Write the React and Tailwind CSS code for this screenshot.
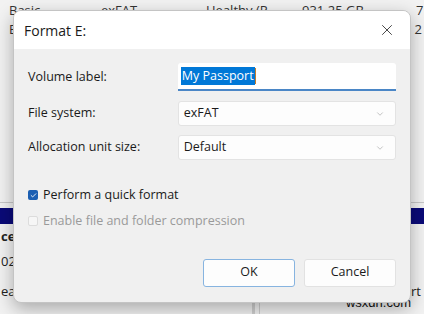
import { Check, ChevronDown, X } from "lucide-react";

const font = { fontFamily: '"Open Sans", "Noto Sans", sans-serif' };

const Select = ({ value }) => (
  <div className="flex h-[25px] w-[220px] items-center justify-between rounded-[3px] border border-[#e3e3e3] bg-[#fdfdfd] pl-[5px] pr-[10px] text-[12.5px] text-[#1a1a1a]">
    <span>{value}</span>
    <ChevronDown size={10} strokeWidth={1.2} className="text-[#888]" />
  </div>
);

const App = () => {
  return (
    <div className="relative h-[314px] w-[424px] overflow-hidden bg-[#f2f2f2] text-[#222]" style={font}>
      {/* backdrop: disk management list behind the dialog */}
      <div className="flex h-[20px] items-center pl-[9px] text-[13px] leading-none text-[#333]">
        <span className="w-[92px]">Basic</span>
        <span className="w-[105px]">exFAT</span>
        <span className="w-[96px]">Healthy (P</span>
        <span className="w-[114px]">931.25 GB</span>
        <span>7</span>
      </div>
      <div className="flex h-[20px] items-center justify-between pl-[9px] pr-[2px] text-[13px] text-[#333]">
        <span>E</span>
        <span>2</span>
      </div>
      <div className="mt-[162px] h-px bg-[#c8c8c8]" />
      <div className="mt-[5px] h-[16px] bg-[#0a0a78]" />
      <div className="flex">
        <div className="flex w-[255px] flex-col border-r-[3px] border-[#cfcfcf] pl-px text-[13px] leading-[25px] text-[#222]">
          <span className="font-bold">ce</span>
          <span>02.</span>
          <span className="mt-[5px]">ea</span>
          <span className="h-[20px]" />
        </div>
        <div className="ml-[4px] flex flex-1 flex-col items-end border-l border-[#cfcfcf] pr-[3px] pt-[58px] text-[13px] text-[#222]">
          <span>rt</span>
        </div>
      </div>
      <div className="absolute right-[13px] bottom-[2px] text-[13px] text-[#111]" style={{ fontFamily: '"Liberation Sans", sans-serif' }}>
        wsxdn.com
      </div>

      {/* dialog */}
      <div className="absolute left-[13px] top-[10px] flex h-[293px] w-[398px] flex-col overflow-hidden rounded-[8px] border border-[#c4c4c4] bg-[#f0f0f0] shadow-[0_6px_18px_rgba(0,0,0,0.3)]">
        <div className="flex h-[38px] items-center justify-between bg-white pl-[10px] pr-[14px]">
          <span className="text-[14px] text-[#1a1a1a]">Format E:</span>
          <X size={18} strokeWidth={1.1} className="text-[#222]" />
        </div>
        <div className="flex flex-1 flex-col px-[14px] pt-[14px]">
          <div className="flex items-center">
            <span className="w-[151px] text-[12.5px] text-[#1a1a1a]">Volume label:</span>
            <div className="flex h-[28px] w-[220px] items-center rounded-t-[3px] border-b-2 border-[#4a86c6] bg-white pl-[3px] text-[12.5px]">
              <span className="bg-[#0078d7] px-px text-white">My Passport</span>
              <span className="h-[16px] w-px bg-[#c77d2b]" />
            </div>
          </div>
          <div className="mt-[10px] flex items-center">
            <span className="w-[151px] text-[12.5px] text-[#1a1a1a]">File system:</span>
            <Select value="exFAT" />
          </div>
          <div className="mt-[9px] flex items-center">
            <span className="w-[151px] text-[12.5px] text-[#1a1a1a]">Allocation unit size:</span>
            <Select value="Default" />
          </div>
          <div className="mt-[26px] flex items-center gap-[5px]">
            <span className="flex h-[10px] w-[10px] items-center justify-center rounded-[2px] bg-[#1c5fb2]">
              <Check size={7} strokeWidth={3} className="text-white" />
            </span>
            <span className="text-[12.5px] text-[#1a1a1a]">Perform a quick format</span>
          </div>
          <div className="mt-[7px] flex items-center gap-[5px]">
            <span className="h-[10px] w-[10px] rounded-[2px] border border-[#dcdcdc] bg-[#f6f6f6]" />
            <span className="text-[12.5px] text-[#9a9a9a]">Enable file and folder compression</span>
          </div>
          <div className="mt-[28px] flex justify-end gap-[9px]">
            <button className="h-[28px] w-[92px] rounded-[3px] border border-[#87b4e0] bg-[#fdfdfd] text-[12.5px] text-[#1a1a1a]">
              OK
            </button>
            <button className="h-[28px] w-[92px] rounded-[3px] border border-[#e2e2e2] bg-[#fdfdfd] text-[12.5px] text-[#1a1a1a]">
              Cancel
            </button>
          </div>
        </div>
      </div>
    </div>
  );
};

export default App;
